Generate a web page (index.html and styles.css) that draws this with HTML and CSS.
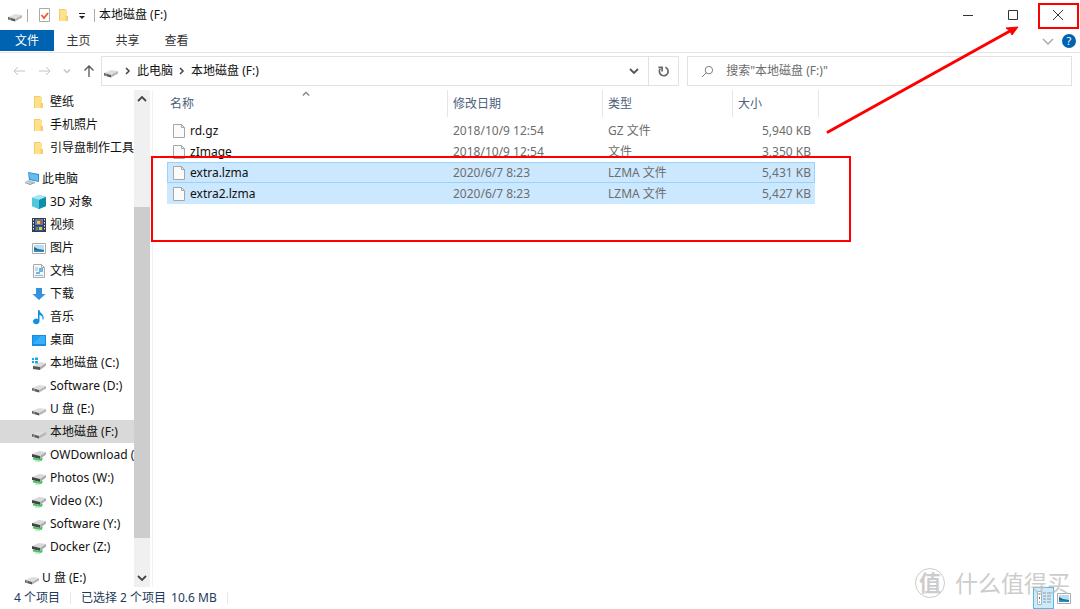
FILE: index.html
```html
<!DOCTYPE html>
<html lang="zh-CN">
<head>
<meta charset="utf-8">
<title>本地磁盘 (F:)</title>
<link rel="stylesheet" href="styles.css">
</head>
<body>
<svg class="sprite" aria-hidden="true">
  <symbol id="drive" viewBox="0 0 16 16">
    <path d="M1 10 8 7l7 1-7 4z" fill="#dedede"/><path d="M1 10l7 2v2.500l-7-2z" fill="#5a5a5a"/><path d="M8 12l7-4v2.500l-7 4z" fill="#b4b4b4"/><path d="M2 12h2" stroke="#8ad08a"/>
  </symbol>
  <symbol id="netdrive" viewBox="0 0 16 16">
    <path d="M1 7 8 4l7 1-6 4z" fill="#d8d8d8"/><path d="M1 7l8 2v3l-8-2z" fill="#444"/><path d="M9 9l6-4v2.500l-6 4.500z" fill="#aaa"/><path d="M2 11.500l8 1.500 1-2" fill="none" stroke="#4cc265" stroke-width="2"/><path d="M4 14h5" stroke="#8bdc9a"/>
  </symbol>
  <symbol id="windrive" viewBox="0 0 16 16">
    <path d="M2 11 9 7l6 1-6 4z" fill="#dcdcdc"/><path d="M2 11l7 1v3l-7-1z" fill="#555"/><path d="M9 12l6-4v2.500L9 15z" fill="#aaa"/><path d="M1 3h2v2H1zM4 2.500h3V5H4zM1 6h2v2H1zM4 6h3v2.500H4z" fill="#14a9e8"/>
  </symbol>
  <symbol id="folder" viewBox="0 0 16 16">
    <path d="M3 2h6l1 1h1v11H3z" fill="#f3cc69"/><path d="M4 3h7v8l-1 3H4z" fill="#ffe08b"/><path d="M9.500 9h2.500v5H9.500z" fill="#f4cd6c"/>
  </symbol>
  <symbol id="pc" viewBox="0 0 16 16">
    <path d="M4 1l11 2v8L5 9z" fill="#3a8fd0"/><path d="M5 2l9 2v6L6 8z" fill="#63bdf2"/><path d="M1 10l5-1 5 2-5 2z" fill="#b9c8d4"/><path d="M1 11l5 2 5-2v1l-5 2-5-2z" fill="#8093a2"/>
  </symbol>
  <symbol id="cube" viewBox="0 0 16 16">
    <path d="M1 4l7-3 7 2v9l-7 3-7-3z" fill="#22acc9"/><path d="M1 4l7-3 7 2-7 3z" fill="#a3e8f2"/><path d="M8 6l7-3v9l-7 3z" fill="#118eab"/><path d="M1 4l7 2v9l-7-3z" fill="#4fcadd"/>
  </symbol>
  <symbol id="video" viewBox="0 0 16 16">
    <path d="M1 1h14v14H1z" fill="#343b4c"/><path d="M4 2h8v6H4z" fill="#527cc2"/><path d="M4 9h8v5H4z" fill="#2e5aa8"/><path d="M6 4h3v3H6zM8 10h3v3H8z" fill="#f1c232"/><path d="M9 3h2v3H9z" fill="#d9542c"/><path d="M5 10h2v3H5z" fill="#4f9d49"/><path d="M2.500 2v12M13.500 2v12" stroke="#e6e6e6" stroke-dasharray="1.500 1.500"/>
  </symbol>
  <symbol id="picture" viewBox="0 0 16 16">
    <path d="M1.500 3.500h13v10h-13z" fill="#fff" stroke="#aaa"/><path d="M3 5h10v7H3z" fill="#b8ddf4"/><path d="M3 7l4 2 6 1v2H3z" fill="#286b87"/><path d="M3 10l10 1v1H3z" fill="#2a8fd0"/>
  </symbol>
  <symbol id="doc" viewBox="0 0 16 16">
    <path d="M2.500 1.500h8l3 3v10h-11z" fill="#f5f8fa" stroke="#aaa"/><path d="M10.500 1.500v3h3" fill="none" stroke="#aaa"/><path d="M8 5h4v4H8zM5 9h4v2H5z" fill="#6db4e8"/><path d="M4 5h3M4 7h3M4 12.500h8" stroke="#9ab8cc"/>
  </symbol>
  <symbol id="download" viewBox="0 0 16 16"><path d="M5 2h6v6h3.500L8 14 1.500 8H5z" fill="#3391e0"/></symbol>
  <symbol id="music" viewBox="0 0 16 16"><path d="M7 1h1.500c0 3.500 5.500 4 4 9.500h-1c.5-3-1-4-3-4.500v6A3.300 2.800 0 1 1 7 10z" fill="#1290e4"/></symbol>
  <symbol id="desktop" viewBox="0 0 16 16"><path d="M1 3h14v11H1z" fill="#158de0"/><path d="M2 4h12v8H2z" fill="#22a1f4"/><path d="M2 12l8-8h4v8z" fill="#3bb0fa"/></symbol>
  <symbol id="file" viewBox="0 0 16 16"><path d="M2.500 1.500h8l3 3v10h-11z" fill="#fbfbfb" stroke="#a6a6a6"/><path d="M10.500 1.500v3h3" fill="none" stroke="#a6a6a6"/></symbol>
  <symbol id="chev-d" viewBox="0 0 10 10"><path d="M1 3l4 4 4-4" fill="none" stroke="currentColor" stroke-width="1.800"/></symbol>
  <symbol id="chev-u" viewBox="0 0 10 10"><path d="M1 7l4-4 4 4" fill="none" stroke="currentColor" stroke-width="1.800"/></symbol>
  <symbol id="chev-r" viewBox="0 0 10 10"><path d="M3 2l3 3-3 3" fill="none" stroke="currentColor" stroke-width="1.500"/></symbol>
</svg>

<div class="window">
  <header class="titlebar">
    <svg class="icon"><use href="#drive"/></svg>
    <span class="rule"></span>
    <button class="quick" aria-label="属性"><svg viewBox="0 0 16 16"><path d="M3.500 1.500h10v13h-10z" fill="#fff" stroke="#aaa"/><path d="M5.500 8l2.500 3 4-5" fill="none" stroke="#ee5a2a" stroke-width="1.800"/></svg></button>
    <button class="quick" aria-label="新建文件夹"><svg><use href="#folder"/></svg></button>
    <button class="quick narrow" aria-label="自定义"><svg viewBox="0 0 16 16"><path d="M5 6.500h6" stroke="#222"/><path d="M5 9h6l-3 3z" fill="#222"/></svg></button>
    <span class="rule"></span>
    <h1>本地磁盘 (F:)</h1>
    <div class="controls">
      <button aria-label="最小化"><svg viewBox="0 0 12 12"><path d="M1 6.500h10" stroke="#333"/></svg></button>
      <button aria-label="最大化"><svg viewBox="0 0 12 12"><path d="M1.500 1.500h9v9h-9z" fill="none" stroke="#333"/></svg></button>
      <button aria-label="关闭"><svg viewBox="0 0 12 12"><path d="M1 1l10 10M11 1L1 11" stroke="#333"/></svg></button>
    </div>
  </header>

  <nav class="ribbon">
    <button class="tab tab-file">文件</button>
    <button class="tab">主页</button>
    <button class="tab">共享</button>
    <button class="tab">查看</button>
    <div class="ribbon-end">
      <button class="expand" aria-label="展开功能区"><svg viewBox="0 0 12 12"><path d="M1 4l5 5 5-5" fill="none" stroke="#aaa" stroke-width="1.500"/></svg></button>
      <button class="help" aria-label="帮助">?</button>
    </div>
  </nav>

  <div class="navbar">
    <div class="history">
      <button class="off" aria-label="后退"><svg viewBox="0 0 16 16"><path d="M14 8H3M7 4L3 8l4 4" fill="none" stroke="currentColor"/></svg></button>
      <button class="off" aria-label="前进"><svg viewBox="0 0 16 16"><path d="M2 8h11M9 4l4 4-4 4" fill="none" stroke="currentColor"/></svg></button>
      <button class="off small" aria-label="最近位置"><svg><use href="#chev-d"/></svg></button>
      <button aria-label="上移"><svg viewBox="0 0 16 16"><path d="M8 14V3M3.500 7.500L8 3l4.500 4.500" fill="none" stroke="currentColor" stroke-width="1.300"/></svg></button>
    </div>
    <div class="address">
      <svg class="icon"><use href="#drive"/></svg>
      <svg class="sep"><use href="#chev-r"/></svg>
      <a href="#pc">此电脑</a>
      <svg class="sep"><use href="#chev-r"/></svg>
      <a href="#drive-f">本地磁盘 (F:)</a>
      <button class="drop" aria-label="以前的位置"><svg><use href="#chev-d"/></svg></button>
      <button class="refresh" aria-label="刷新"><svg viewBox="0 0 14 14"><path d="M9 2.500A4.700 4.700 0 1 1 3.500 4" fill="none" stroke="#666" stroke-width="1.800"/><path d="M1.500 2.500H5.500V7" fill="none" stroke="#666" stroke-width="1.800"/></svg></button>
    </div>
    <label class="search">
      <svg viewBox="0 0 14 14"><circle cx="8.500" cy="5.500" r="4" fill="none" stroke="#777"/><path d="M5.500 8.500L1 13" stroke="#777"/></svg>
      <input type="search" aria-label="搜索" placeholder='搜索"本地磁盘 (F:)"'>
    </label>
  </div>

  <div class="body">
    <nav class="tree">
      <ul>
        <li><a href="#i"><svg><use href="#folder"/></svg>壁纸</a></li>
        <li><a href="#i"><svg><use href="#folder"/></svg>手机照片</a></li>
        <li><a href="#i"><svg><use href="#folder"/></svg>引导盘制作工具</a></li>
        <li class="root"><a href="#i"><svg><use href="#pc"/></svg>此电脑</a></li>
        <li><a href="#i"><svg><use href="#cube"/></svg>3D 对象</a></li>
        <li><a href="#i"><svg><use href="#video"/></svg>视频</a></li>
        <li><a href="#i"><svg><use href="#picture"/></svg>图片</a></li>
        <li><a href="#i"><svg><use href="#doc"/></svg>文档</a></li>
        <li><a href="#i"><svg><use href="#download"/></svg>下载</a></li>
        <li><a href="#i"><svg><use href="#music"/></svg>音乐</a></li>
        <li><a href="#i"><svg><use href="#desktop"/></svg>桌面</a></li>
        <li><a href="#i"><svg><use href="#windrive"/></svg>本地磁盘 (C:)</a></li>
        <li><a href="#i"><svg><use href="#drive"/></svg>Software (D:)</a></li>
        <li><a href="#i"><svg><use href="#drive"/></svg>U 盘 (E:)</a></li>
        <li class="current"><a href="#i"><svg><use href="#drive"/></svg>本地磁盘 (F:)</a></li>
        <li><a href="#i"><svg><use href="#netdrive"/></svg>OWDownload (</a></li>
        <li><a href="#i"><svg><use href="#netdrive"/></svg>Photos (W:)</a></li>
        <li><a href="#i"><svg><use href="#netdrive"/></svg>Video (X:)</a></li>
        <li><a href="#i"><svg><use href="#netdrive"/></svg>Software (Y:)</a></li>
        <li><a href="#i"><svg><use href="#netdrive"/></svg>Docker (Z:)</a></li>
        <li class="root"><a href="#i"><svg><use href="#drive"/></svg>U 盘 (E:)</a></li>
      </ul>
    </nav>
    <div class="scrollbar">
      <button aria-label="向上滚动"><svg><use href="#chev-u"/></svg></button>
      <div class="track"><div class="thumb"></div></div>
      <button aria-label="向下滚动"><svg><use href="#chev-d"/></svg></button>
    </div>
    <main class="files">
      <table>
        <colgroup><col class="c-name"><col class="c-date"><col class="c-type"><col class="c-size"></colgroup>
        <thead>
          <tr><th class="sorted">名称<svg><use href="#chev-u"/></svg></th><th>修改日期</th><th>类型</th><th>大小</th></tr>
        </thead>
        <tbody>
          <tr><td><span class="name"><svg><use href="#file"/></svg>rd.gz</span></td><td>2018/10/9 12:54</td><td>GZ 文件</td><td>5,940 KB</td></tr>
          <tr><td><span class="name"><svg><use href="#file"/></svg>zImage</span></td><td>2018/10/9 12:54</td><td>文件</td><td>3,350 KB</td></tr>
          <tr class="selected focus"><td><span class="name"><svg><use href="#file"/></svg>extra.lzma</span></td><td>2020/6/7 8:23</td><td>LZMA 文件</td><td>5,431 KB</td></tr>
          <tr class="selected"><td><span class="name"><svg><use href="#file"/></svg>extra2.lzma</span></td><td>2020/6/7 8:23</td><td>LZMA 文件</td><td>5,427 KB</td></tr>
        </tbody>
      </table>
    </main>
  </div>

  <footer class="status">
    <span class="count">4 个项目</span>
    <span class="chosen">已选择 2 个项目<span>10.6 MB</span></span>
    <div class="views">
      <button class="on" aria-label="详细信息"><svg viewBox="0 0 16 16"><path d="M1.500 1.500h4v13h-4z" fill="#fff" stroke="#9bb"/><path d="M3 4h1M3 12h1" stroke="#47a"/><path d="M3 8h1" stroke="#e33" stroke-width="2"/><path d="M7 3h3M11 3h4M7 6h3M11 6h4M7 9h3M11 9h4M7 12h3M11 12h4" stroke="#8a9aa5"/></svg></button>
      <button aria-label="大图标"><svg><use href="#picture"/></svg></button>
    </div>
  </footer>
</div>

<div class="watermark"><span class="seal">值</span><span>什么值得买</span></div>
<svg class="marks" viewBox="0 0 1080 609" aria-hidden="true">
  <path d="M152 157h698v84H152zM1039 4h39v24h-39z" fill="none" stroke="#f00" stroke-width="2"/>
  <path d="M828 132l182-101" stroke="#f00" stroke-width="3" stroke-linecap="round"/>
  <path d="M1018 27l-6 8-2-4-4-3z" fill="#f00" stroke="#f00" stroke-width="1"/>
</svg>
</body>
</html>
```
FILE: styles.css
```css
* { box-sizing: border-box; }
body {
  margin: 0;
  background: #fff;
  color: #111;
  font: 12px/20px "Noto Sans", "Noto Sans CJK SC", sans-serif;
}
button {
  display: flex;
  align-items: center;
  justify-content: center;
  padding: 0;
  border: 0;
  background: none;
  color: inherit;
  font: inherit;
}
a { color: inherit; text-decoration: none; }
svg { display: block; flex: none; }
.sprite { position: absolute; width: 0; height: 0; }
.icon { width: 16px; height: 16px; }

.window { display: flex; flex-direction: column; height: 100vh; }

.titlebar { display: flex; flex: none; align-items: center; height: 30px; padding-left: 7px; }
.quick { width: 20px; height: 20px; }
.narrow { width: 16px; }
.quick svg { width: 16px; height: 16px; }
.rule { width: 1px; height: 13px; margin: 0 4px; background: #aaa; }
.rule + .quick { margin-left: 2px; }
h1 { margin: 0; font-size: 12px; font-weight: 400; }
.controls { display: flex; margin-left: auto; }
.controls button { width: 45px; height: 29px; }
.controls svg { width: 12px; height: 12px; }

.ribbon { display: flex; flex: none; height: 23px; border-bottom: 1px solid #e4e4e4; }
.tab { width: 49px; height: 21px; color: #333; }
.tab-file { width: 54px; background: #0063b1; color: #fff; }
.ribbon-end { display: flex; gap: 8px; align-items: center; margin-left: auto; padding-right: 4px; }
.expand svg { width: 12px; height: 12px; }
.help { width: 14px; height: 14px; border-radius: 50%; background: #0063b1; color: #fff; font-size: 11px; line-height: 14px; }

.navbar { display: flex; flex: none; gap: 8px; padding: 3px 8px 4px 0; }
.history { display: flex; align-items: center; justify-content: space-between; width: 101px; padding: 0 4px 0 11px; color: #555; }
.history svg { width: 16px; height: 16px; }
.history .small svg { width: 8px; height: 8px; }
.history .off { color: #c4c4c4; }
.address { display: flex; flex: 14; align-items: center; height: 30px; margin-left: -8px; padding-left: 1px; border: 1px solid #e2e2e2; }
.address .sep { width: 10px; height: 10px; margin: 0 4px; color: #444; }
.drop { width: 28px; height: 28px; margin-left: auto; color: #555; }
.drop svg { width: 10px; height: 10px; }
.refresh { width: 30px; height: 28px; border-left: 1px solid #e2e2e2; }
.refresh svg { width: 13px; height: 13px; }
.search { display: flex; flex: 9; gap: 12px; align-items: center; height: 30px; padding-left: 13px; border: 1px solid #e2e2e2; }
.search svg { width: 13px; height: 13px; }
.search input { flex: 1; min-width: 0; padding: 0; border: 0; outline: 0; background: none; font: inherit; }
.search input::placeholder { color: #6d6d6d; opacity: 1; }

.body { display: flex; flex: 1; min-height: 0; }
.tree { flex: none; width: 134px; overflow: hidden; }
.tree ul { margin: 0; padding: 0; list-style: none; }
.tree a { display: flex; gap: 3px; align-items: center; height: 23px; padding-left: 31px; white-space: nowrap; }
.tree svg { width: 16px; height: 16px; }
.tree .root { margin-top: 8px; }
.tree .root a { gap: 2px; padding-left: 24px; }
.tree .current { background: #d9d9d9; }
.scrollbar { display: flex; flex: none; flex-direction: column; width: 16px; background: #f0f0f0; color: #444; }
.scrollbar button { height: 18px; }
.scrollbar svg { width: 10px; height: 10px; }
.track { display: flex; flex: 1; flex-direction: column; justify-content: flex-end; padding-bottom: 31px; }
.thumb { height: 77%; background: #cdcdcd; }

.files { flex: 1; min-width: 0; margin-left: 2px; padding-left: 14px; border-left: 1px solid #f2f2f2; }
table { width: 648px; border-collapse: separate; border-spacing: 0; table-layout: fixed; }
.c-name { width: 280px; }
.c-date { width: 155px; }
.c-type { width: 130px; }
th { position: relative; height: 27px; padding: 0 0 0 5px; border-left: 1px solid #e5e5e5; color: #4c607a; font-weight: 400; text-align: left; }
th.sorted { padding-left: 3px; border-left: 0; }
.sorted svg { position: absolute; top: 0; left: 135px; width: 8px; height: 8px; color: #888; }
th:last-child::after { content: ""; position: absolute; top: 0; right: -4px; width: 1px; height: 100%; background: #e5e5e5; }
tbody::before { content: ""; display: block; height: 3px; }
td { height: 21px; padding: 0 0 0 6px; border: solid transparent; border-width: 1px 0; color: #6d6d6d; line-height: 19px; }
td:first-child { padding-left: 4px; color: #111; }
td:last-child { padding: 0 4px 0 0; text-align: right; }
.name { display: flex; gap: 3px; align-items: center; }
.name svg { width: 16px; height: 16px; }
.selected td { border-color: #cce8ff; background: #cce8ff; }
.focus td { border-color: #99d1ff; }
.focus td:first-child { border-left: 1px solid #99d1ff; padding-left: 3px; }
.focus td:last-child { border-right: 1px solid #99d1ff; padding-right: 3px; }

.status { display: flex; flex: none; align-items: center; height: 22px; padding: 0 8px 0 14px; color: #1e395b; }
.count { padding-right: 10px; border-right: 1px solid #e8e8e8; line-height: 12px; }
.chosen { display: flex; gap: 5px; padding: 0 10px; border-right: 1px solid #e8e8e8; line-height: 12px; }
.views { display: flex; gap: 2px; align-items: center; margin-left: auto; }
.views svg { width: 16px; height: 16px; }
.views .on { width: 21px; height: 22px; border: 1px solid #58b8e8; background: #cdeafa; }

.watermark {
  position: absolute;
  right: 10px;
  bottom: 11px;
  display: flex;
  gap: 10px;
  align-items: center;
  color: rgba(190, 190, 190, 0.8);
  font-size: 23px;
  line-height: 30px;
  pointer-events: none;
}
.seal { width: 30px; height: 30px; border: 1px solid; border-radius: 50%; font-size: 22px; font-weight: 700; line-height: 27px; text-align: center; }
.marks { position: absolute; top: 0; left: 0; width: 1080px; height: 609px; pointer-events: none; }
```
